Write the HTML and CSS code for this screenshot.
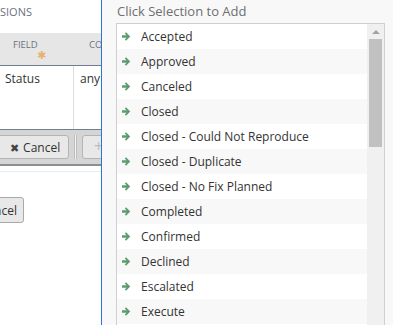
FILE: index.html
```html
<!DOCTYPE html>
<html lang="en">
<head>
    <meta charset="UTF-8">
    <meta name="viewport" content="width=device-width, initial-scale=1.0">
    <title>Conditions</title>
    <link rel="stylesheet" href="styles.css">
  </head>
  <body>
    <div class="editor">
      <div class="editor-title">SIONS</div>

      <div class="grid-head">
        <div class="col col-field">Field<span class="req">&#10033;</span></div>
        <div class="col col-cond">Co</div>
      </div>

      <div class="grid-row">
        <div class="cell cell-field">Status</div>
        <div class="cell cell-cond">any</div>
      </div>

      <div class="toolbar">
        <button class="btn btn-cut" type="button"><span class="x">&#10006;</span> Cancel</button>
        <div class="sep"></div>
        <button class="btn btn-add" type="button"><span class="plus">+</span></button>
      </div>

      <div class="footer">
        <button class="btn btn-foot" type="button">Cancel</button>
      </div>
    </div>

    <div class="picker">
      <div class="picker-title">Click Selection to Add</div>
      <div class="picker-box">
        <ul class="picker-list">
          <li><svg class="arrow" viewBox="0 0 8 8"><path d="M0 2.9h4L2.5 1.4 3.6 0.3 7.3 4 3.6 7.7 2.5 6.6 4 5.1H0z"/></svg>Accepted</li>
          <li><svg class="arrow" viewBox="0 0 8 8"><path d="M0 2.9h4L2.5 1.4 3.6 0.3 7.3 4 3.6 7.7 2.5 6.6 4 5.1H0z"/></svg>Approved</li>
          <li><svg class="arrow" viewBox="0 0 8 8"><path d="M0 2.9h4L2.5 1.4 3.6 0.3 7.3 4 3.6 7.7 2.5 6.6 4 5.1H0z"/></svg>Canceled</li>
          <li><svg class="arrow" viewBox="0 0 8 8"><path d="M0 2.9h4L2.5 1.4 3.6 0.3 7.3 4 3.6 7.7 2.5 6.6 4 5.1H0z"/></svg>Closed</li>
          <li><svg class="arrow" viewBox="0 0 8 8"><path d="M0 2.9h4L2.5 1.4 3.6 0.3 7.3 4 3.6 7.7 2.5 6.6 4 5.1H0z"/></svg>Closed - Could Not Reproduce</li>
          <li><svg class="arrow" viewBox="0 0 8 8"><path d="M0 2.9h4L2.5 1.4 3.6 0.3 7.3 4 3.6 7.7 2.5 6.6 4 5.1H0z"/></svg>Closed - Duplicate</li>
          <li><svg class="arrow" viewBox="0 0 8 8"><path d="M0 2.9h4L2.5 1.4 3.6 0.3 7.3 4 3.6 7.7 2.5 6.6 4 5.1H0z"/></svg>Closed - No Fix Planned</li>
          <li><svg class="arrow" viewBox="0 0 8 8"><path d="M0 2.9h4L2.5 1.4 3.6 0.3 7.3 4 3.6 7.7 2.5 6.6 4 5.1H0z"/></svg>Completed</li>
          <li><svg class="arrow" viewBox="0 0 8 8"><path d="M0 2.9h4L2.5 1.4 3.6 0.3 7.3 4 3.6 7.7 2.5 6.6 4 5.1H0z"/></svg>Confirmed</li>
          <li><svg class="arrow" viewBox="0 0 8 8"><path d="M0 2.9h4L2.5 1.4 3.6 0.3 7.3 4 3.6 7.7 2.5 6.6 4 5.1H0z"/></svg>Declined</li>
          <li><svg class="arrow" viewBox="0 0 8 8"><path d="M0 2.9h4L2.5 1.4 3.6 0.3 7.3 4 3.6 7.7 2.5 6.6 4 5.1H0z"/></svg>Escalated</li>
          <li><svg class="arrow" viewBox="0 0 8 8"><path d="M0 2.9h4L2.5 1.4 3.6 0.3 7.3 4 3.6 7.7 2.5 6.6 4 5.1H0z"/></svg>Execute</li>
        </ul>
        <div class="scrollbar">
          <div class="scroll-up"></div>
          <div class="scroll-thumb"></div>
        </div>
      </div>
    </div>
  </body>
</html>
```

FILE: styles.css
```css
html, body {
  height: 100%;
}

body {
  margin: 0;
  display: flex;
  font-family: 'Open Sans', 'Noto Sans', sans-serif;
  color: #333;
  overflow: hidden;
}

/* left: condition editor, cut off by the panel */
.editor {
  width: 101px;
  flex: none;
  border-right: 1px solid #2f74d0;
  background: #fff;
  overflow: hidden;
  white-space: nowrap;
}

.editor-title {
  height: 33px;
  line-height: 24px;
  font-size: 11px;
  color: #6b7380;
}

.grid-head {
  display: flex;
  height: 32px;
  background: #e6e6e6;
  border-bottom: 1px solid #6f7d91;
}

.col {
  position: relative;
  flex: none;
  font-size: 9.5px;
  text-transform: uppercase;
  color: #6b7380;
  line-height: 10px;
  padding-top: 7px;
}

.col-field {
  width: 76px;
  padding-left: 13px;
  box-sizing: border-box;
}

.col-cond {
  padding-left: 13px;
}

.req {
  position: absolute;
  left: 37px;
  top: 17px;
  font-family: 'DejaVu Sans', sans-serif;
  font-size: 11px;
  line-height: 11px;
  color: #eab070;
}

.grid-row {
  display: flex;
  height: 63px;
  border-bottom: 1px solid #6f7d91;
}

.cell {
  flex: none;
  font-size: 12px;
  line-height: 24px;
  padding-top: 1px;
}

.cell-field {
  width: 74px;
  padding-left: 5px;
  box-sizing: border-box;
  border-right: 1px solid #dcdcdc;
}

.cell-cond {
  padding-left: 6px;
}

.toolbar {
  display: flex;
  align-items: center;
  height: 34px;
  background: #d5d5d5;
  border-bottom: 2px solid #8a8f96;
}

.btn {
  flex: none;
  font-family: inherit;
  font-size: 12px;
  color: #333;
  height: 24px;
  background: #e8e8e8;
  border: 1px solid #b4b4b4;
  border-radius: 3px;
  padding: 0;
}

.btn-cut {
  width: 72px;
  margin-left: -3px;
  padding-left: 12px;
  text-align: left;
}

.x {
  font-size: 11px;
  color: #444;
  margin-right: 1px;
}

.sep {
  flex: none;
  width: 1px;
  height: 24px;
  margin: 0 5px;
  background: #f4f4f4;
  border-left: 1px solid #bdbdbd;
  border-right: 1px solid #bdbdbd;
}

.btn-add {
  width: 40px;
  text-align: left;
  padding-left: 11px;
}

.plus {
  color: #bbb;
  font-size: 16px;
  line-height: 16px;
}

.footer {
  border-top: 1px solid #ececec;
  margin-top: 5px;
  padding-top: 25px;
}

.btn-foot {
  width: 66px;
  height: 26px;
  margin-left: -42px;
  text-align: right;
  padding-right: 6px;
  border-color: #a9a9a9;
}

/* right: selection picker */
.picker {
  flex: 1;
  min-width: 0;
  background: #f8f8f8;
  padding: 1px 8px 0 14px;
}

.picker-title {
  font-size: 13px;
  line-height: 20px;
  color: #6e6e6e;
  margin-left: 1px;
  margin-bottom: 2px;
}

.picker-box {
  display: flex;
  border: 1px solid #cfcfcf;
  background: #fff;
  height: 400px;
}

.picker-list {
  list-style: none;
  margin: 0;
  padding: 0;
  flex: 1;
}

.picker-list li {
  display: flex;
  align-items: center;
  height: 25px;
  font-size: 12px;
  color: #333;
  padding-left: 5px;
}

.picker-list li:nth-child(even) {
  background: #f8f8f8;
}

.arrow {
  width: 9px;
  height: 9px;
  fill: #5c9c70;
  margin-right: 10px;
}

.scrollbar {
  width: 17px;
  flex: none;
  background: #f0f0f0;
}

.scroll-up {
  width: 0;
  height: 0;
  margin: 6px auto 5px;
  border-left: 4px solid transparent;
  border-right: 4px solid transparent;
  border-bottom: 4px solid #a3a3a3;
}

.scroll-thumb {
  width: 13px;
  height: 108px;
  margin: 0 auto;
  background: #c1c1c1;
}
```
